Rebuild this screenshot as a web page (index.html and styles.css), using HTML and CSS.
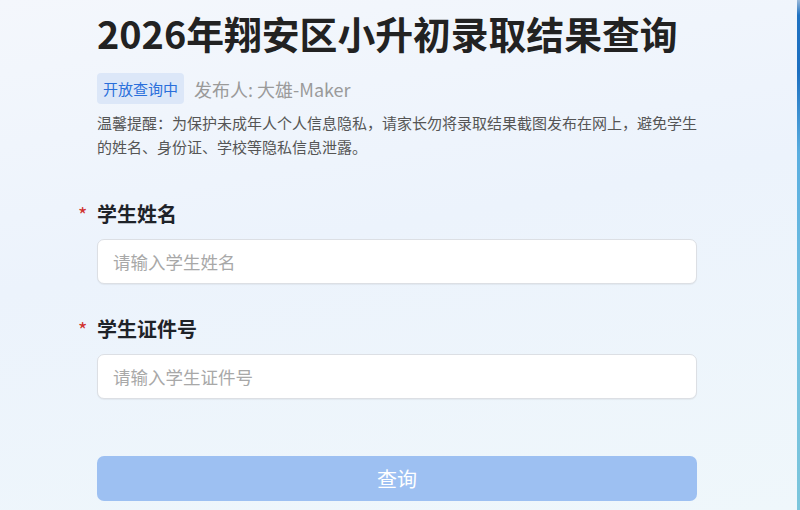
FILE: index.html
```html
<!DOCTYPE html>
<html lang="zh-CN">
<head>
<meta charset="utf-8">
<title>2026年翔安区小升初录取结果查询</title>
<link rel="stylesheet" href="styles.css">
</head>
<body>
<main class="page">
  <h1 class="title">2026年翔安区小升初录取结果查询</h1>
  <div class="meta">
    <span class="tag">开放查询中</span>
    <span class="author">发布人: 大雄-Maker</span>
  </div>
  <p class="notice">温馨提醒：为保护未成年人个人信息隐私，请家长勿将录取结果截图发布在网上，避免学生的姓名、身份证、学校等隐私信息泄露。</p>

  <form class="form">
    <div class="field">
      <label class="label" for="name"><span class="req">*</span>学生姓名</label>
      <input class="input" id="name" type="text" placeholder="请输入学生姓名">
    </div>
    <div class="field">
      <label class="label" for="idno"><span class="req">*</span>学生证件号</label>
      <input class="input" id="idno" type="text" placeholder="请输入学生证件号">
    </div>
    <button class="submit" type="button" disabled>查询</button>
  </form>
</main>
<div class="scroll-edge"></div>
</body>
</html>
```

FILE: styles.css
```css
* {
  box-sizing: border-box;
}

html, body {
  margin: 0;
  height: 100%;
}

body {
  font-family: "Noto Sans CJK SC", "Noto Sans", sans-serif;
  background: linear-gradient(170deg, #f4f7fc 0%, #ecf3fc 45%, #eff7fb 100%);
  color: #222;
  overflow: hidden;
}

.page {
  width: 600px;
  margin-left: 97px;
  padding-top: 10px;
}

.title {
  margin: 0;
  font-size: 37.8px;
  line-height: 46px;
  font-weight: 700;
  color: #222;
  white-space: nowrap;
}

.meta {
  display: flex;
  align-items: center;
  gap: 10px;
  margin-top: 17px;
}

.tag {
  display: inline-flex;
  align-items: center;
  height: 31px;
  padding: 0 6px;
  border-radius: 4px;
  background: #dce7f8;
  color: #2a6fdb;
  font-size: 15px;
}

.author {
  color: #9a9a9a;
  font-size: 18px;
}

.notice {
  margin: 7px 0 0;
  font-size: 15px;
  line-height: 24px;
  color: #555;
}

.form {
  margin-top: 41px;
}

.field {
  margin-bottom: 31px;
}

.label {
  position: relative;
  display: block;
  font-size: 20px;
  line-height: 28px;
  font-weight: 700;
  color: #1f2329;
  margin-bottom: 11px;
}

.req {
  position: absolute;
  left: -19px;
  top: 1px;
  color: #d0312d;
  font-weight: 400;
  font-size: 20px;
}

.input {
  display: block;
  width: 100%;
  height: 45px;
  padding: 0 15px;
  border: 1px solid #dcdfe4;
  border-radius: 7px;
  background: #fff;
  font-family: inherit;
  font-size: 17.5px;
  color: #333;
  box-shadow: 0 1px 1px rgba(0, 0, 0, 0.05);
  outline: none;
}

.input::placeholder {
  color: #a8a8a8;
}

.submit {
  display: block;
  width: 100%;
  height: 45px;
  margin-top: 57px;
  border: none;
  border-radius: 7px;
  background: #9dc0f2;
  color: #fff;
  font-family: inherit;
  font-size: 20px;
}

/* thin blue scroll indicator along the right edge */
.scroll-edge {
  position: fixed;
  top: 0;
  right: 0;
  width: 3px;
  height: 100%;
  background: linear-gradient(180deg, #9ab8d8 0%, #1f72c2 3%, #1c6fc0 14%, #5aaee0 30%, #72bfe0 60%, #7cc6dc 100%);
}
```
